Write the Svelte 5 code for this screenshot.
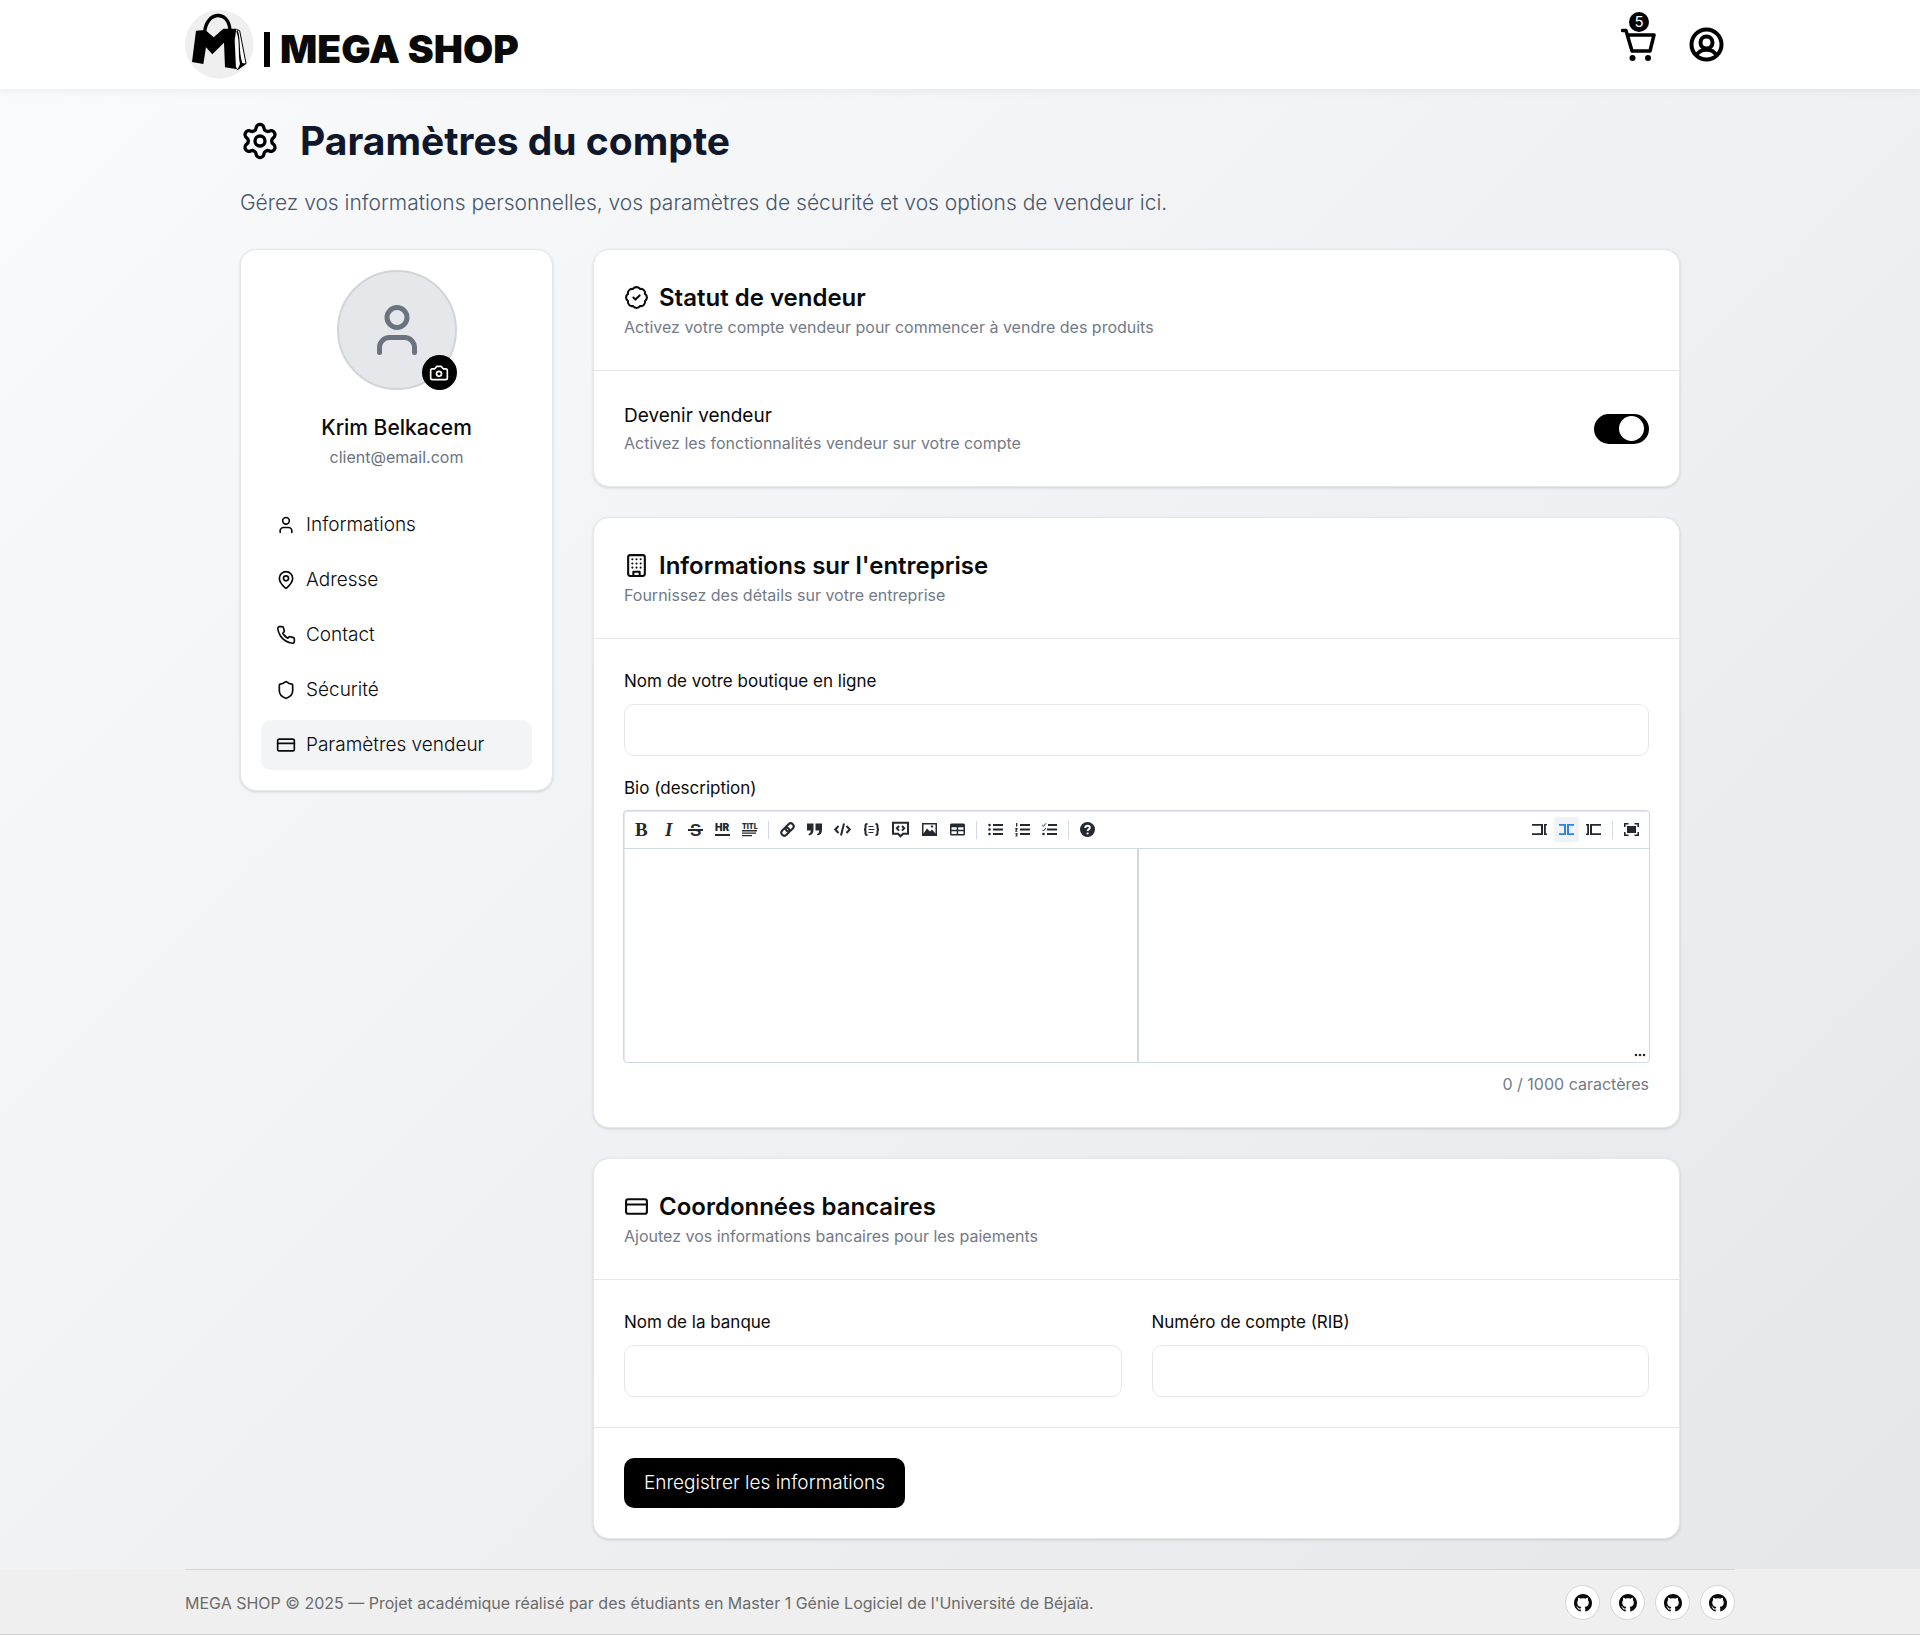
<script>
  let seller = $state(true);
  let bio = $state('');

  const menu = [
    { label: 'Informations', icon: 'user' },
    { label: 'Adresse', icon: 'pin' },
    { label: 'Contact', icon: 'phone' },
    { label: 'Sécurité', icon: 'shield' },
    { label: 'Paramètres vendeur', icon: 'card', active: true }
  ];

  const tools = [
    ['bold', 'italic', 'strike', 'hr', 'title'],
    ['link', 'quote', 'code', 'braces', 'comment', 'image', 'table'],
    ['ul', 'ol', 'task'],
    ['help']
  ];
  const views = [['edit', 'live', 'preview'], ['full']];
  const wide = ['code', 'braces', 'comment', 'image'];
</script>

{#snippet icon(name)}
  <svg class="icon" viewBox="0 0 24 24" aria-hidden="true">
    {#if name === 'user'}
      <path d="M19 21v-2a4 4 0 0 0-4-4H9a4 4 0 0 0-4 4v2" /><circle cx="12" cy="7" r="4" />
    {:else if name === 'pin'}
      <path d="M20 10c0 4.993-5.539 10.193-7.399 11.799a1 1 0 0 1-1.202 0C9.539 20.193 4 14.993 4 10a8 8 0 0 1 16 0" /><circle cx="12" cy="10" r="3" />
    {:else if name === 'phone'}
      <path d="M22 16.92v3a2 2 0 0 1-2.18 2 19.79 19.79 0 0 1-8.63-3.07 19.5 19.5 0 0 1-6-6 19.79 19.79 0 0 1-3.07-8.67A2 2 0 0 1 4.11 2h3a2 2 0 0 1 2 1.72 12.84 12.84 0 0 0 .7 2.81 2 2 0 0 1-.45 2.11L8.09 9.91a16 16 0 0 0 6 6l1.27-1.27a2 2 0 0 1 2.11-.45 12.84 12.84 0 0 0 2.81.7A2 2 0 0 1 22 16.92z" />
    {:else if name === 'shield'}
      <path d="M20 13c0 5-3.5 7.5-7.66 8.95a1 1 0 0 1-.67-.01C7.5 20.5 4 18 4 13V6a1 1 0 0 1 1-1c2 0 4.5-1.2 6.24-2.72a1.17 1.17 0 0 1 1.52 0C14.51 3.81 17 5 19 5a1 1 0 0 1 1 1z" />
    {:else if name === 'card'}
      <rect x="2" y="5" width="20" height="14" rx="2" /><path d="M2 10h20" />
    {:else if name === 'camera'}
      <path d="M14.5 4h-5L7 7H4a2 2 0 0 0-2 2v9a2 2 0 0 0 2 2h16a2 2 0 0 0 2-2V9a2 2 0 0 0-2-2h-3l-2.5-3z" /><circle cx="12" cy="13" r="3" />
    {:else if name === 'badge'}
      <path d="M3.85 8.62a4 4 0 0 1 4.78-4.77 4 4 0 0 1 6.74 0 4 4 0 0 1 4.78 4.78 4 4 0 0 1 0 6.74 4 4 0 0 1-4.77 4.78 4 4 0 0 1-6.75 0 4 4 0 0 1-4.78-4.77 4 4 0 0 1 0-6.76Z" /><path d="m9 12 2 2 4-4" />
    {:else if name === 'building'}
      <rect x="4" y="2" width="16" height="20" rx="2" /><path d="M9 22v-4h6v4M8 6h.01M16 6h.01M12 6h.01M12 10h.01M12 14h.01M16 10h.01M16 14h.01M8 10h.01M8 14h.01" />
    {:else if name === 'gear'}
      <path d="M9.671 4.136a2.34 2.34 0 0 1 4.659 0 2.34 2.34 0 0 0 3.319 1.915 2.34 2.34 0 0 1 2.33 4.033 2.34 2.34 0 0 0 0 3.831 2.34 2.34 0 0 1-2.33 4.033 2.34 2.34 0 0 0-3.319 1.915 2.34 2.34 0 0 1-4.659 0 2.34 2.34 0 0 0-3.32-1.915 2.34 2.34 0 0 1-2.33-4.033 2.34 2.34 0 0 0 0-3.831A2.34 2.34 0 0 1 6.35 6.051a2.34 2.34 0 0 0 3.319-1.915" /><circle cx="12" cy="12" r="3" />
    {/if}
  </svg>
{/snippet}

{#snippet tool(name)}
  <button type="button" class="tool" class:on={name === 'live'} aria-label={name}>
    <svg class:wide={wide.includes(name)} viewBox={wide.includes(name) ? '0 0 17 15' : '0 0 15 15'} aria-hidden="true">
      {#if name === 'bold'}
        <text class="serif" x="1" y="14">B</text>
      {:else if name === 'italic'}
        <text class="serif slanted" x="4" y="14">I</text>
      {:else if name === 'strike'}
        <text class="sans" x="2" y="14">S</text><path class="gap" d="M0 6h15v3H0z" /><path d="M0 7h15v2H0z" />
      {:else if name === 'hr'}
        <text class="tiny" x="0" y="9">HR</text><path d="M0 12h15v2H0z" />
      {:else if name === 'title'}
        <text class="mini" x="0" y="7">TITL</text><path d="M0 8h15v1.5H0zM0 10.500h14v1.200H0zM0 13h10v1.200H0z" />
      {:else if name === 'link'}
        <g class="line thick" transform="rotate(-45 7.500 7.500)"><rect x="0" y="4.500" width="9" height="6" rx="3" /><rect x="6" y="4.500" width="9" height="6" rx="3" /></g>
      {:else if name === 'quote'}
        <path d="M0 1.500h6.500V8Q6.500 12.500 2 13.500L1.500 12Q3.800 11 3.900 8.500H0zM8.500 1.500H15V8Q15 12.500 10.500 13.500L10 12Q12.300 11 12.400 8.500H8.500z" />
      {:else if name === 'code'}
        <path class="line thick" d="M4.500 4 1.200 7.500l3.300 3.500M12.500 4l3.300 3.500-3.300 3.500M10 1.500l-3 12" />
      {:else if name === 'braces'}
        <path class="line thick" d="M4.500 2H4Q2.500 2 2.500 4v2q0 1.500-1.500 1.500 1.500 0 1.500 1.500v2q0 2 1.500 2h.5M12.500 2h.5q1.500 0 1.500 2v2q0 1.500 1.500 1.500-1.500 0-1.500 1.500v2q0 2-1.500 2h-.5" /><path d="M5.500 4h5v1h-5zM5.500 7h6v1h-6zM5.500 10h5v1h-5z" />
      {:else if name === 'comment'}
        <path class="line thick" d="M1 .8h15v11h-5l-2.500 2.500L6 11.800H1zM7 4 4.800 6.300 7 8.600M10 4l2.200 2.300L10 8.600" />
      {:else if name === 'image'}
        <path fill-rule="evenodd" d="M1 1h15v13H1zM2.500 2.500v9L6 6.500l3 3 2-2 3.500 4v-9zM11 3.200a1.200 1.200 0 1 0 .01 0z" />
      {:else if name === 'table'}
        <path fill-rule="evenodd" d="M1.500 1.500h12Q15 1.500 15 3v9q0 1.500-1.500 1.500h-12Q0 13.500 0 12V3q0-1.500 1.500-1.500zM1.500 5.200v2.500h5.200V5.200zM8.200 5.200v2.500h5.300V5.200zM1.500 9.200V12h5.200V9.200zM8.200 9.200V12h5.300V9.200z" />
      {:else if name === 'ul'}
        <circle cx="1.500" cy="3" r="1.300" /><circle cx="1.500" cy="7.500" r="1.300" /><circle cx="1.500" cy="12" r="1.300" /><path d="M5 2h10v2H5zM5 6.500h10v2H5zM5 11h10v2H5z" />
      {:else if name === 'ol'}
        <path d="M1 1h1.300v3.500H1zM.3 6h2.200v1.500L1.500 9h1v.8H.2V9l1-1.500H.3zM.3 11h2.200v3.500H.3v-.8h1v-.6h-.8v-.8h.8v-.6h-1zM5 2h10v2H5zM5 6.500h10v2H5zM5 11h10v2H5z" />
      {:else if name === 'task'}
        <path d="M6 2h9v2H6zM5 6.500h10v2H5zM5 11h10v2H5z" /><circle cx="1.500" cy="12" r="1.300" /><path class="line slim" d="m.2 3 1.300 1.300L4 1.300M.2 7.700 1.500 9 4 6" />
      {:else if name === 'help'}
        <circle cx="7.500" cy="7.500" r="7.500" /><path class="line thick light" d="M5.300 6q0-2.300 2.300-2.300T9.800 5.800c0 1.500-2.200 1.400-2.200 3.200" /><circle class="dot" cx="7.600" cy="11.500" r="1.100" />
      {:else if name === 'edit'}
        <path d="M0 2h11v11H0v-1.800h9V3.800H0zM12 2h3v1.500h-1.200v8H15V13h-3z" />
      {:else if name === 'live'}
        <path d="M0 2h7v11H0v-1.800h5V3.800H0zM8 2h7v1.800h-5v7.400h5V13H8z" />
      {:else if name === 'preview'}
        <path d="M15 2H4v11h11v-1.800H6V3.800h9zM3 2H0v1.500h1.200v8H0V13h3z" />
      {:else if name === 'full'}
        <path d="M3 4h9v7H3zM0 1h4.500v1.600H1.600V5H0zM15 1h-4.500v1.600h2.900V5H15zM0 14h4.500v-1.600H1.600V10H0zM15 14h-4.500v-1.600h2.900V10H15z" />
      {/if}
    </svg>
  </button>
{/snippet}

<header class="topbar">
  <div class="wrap">
    <a class="brand" href="#accueil">
      <svg class="logo" viewBox="0 0 207 207" aria-hidden="true">
        <circle cx="103" cy="103" r="103" fill="#efefef" />
        <path d="M59 66C64 4 130 -2 135 60" fill="none" stroke="#000" stroke-width="10" />
        <path d="M33 62 61 60 86 82 115 56 154 56 149 90 153 177 120 172 117 98 82 133 63 112 55 162 21 156Z" />
        <path d="M154 58 164 62 183 160 157 179 153 172" fill="#fff" stroke="#000" stroke-width="3" />
        <path d="M158 62C168 95 158 120 166 160L158 178 155 100Z" fill="#fff" />
        <path d="M158 60C168 90 161 125 172 159L184 161 157 180 165 162C158 130 166 95 154 64Z" />
      </svg>
      <span class="bar"></span>
      <span class="wordmark">MEGA SHOP</span>
    </a>
    <nav class="actions" aria-label="Compte">
      <a class="cart" href="#panier" aria-label="Panier">
        <svg viewBox="0 0 35 35" aria-hidden="true">
          <path d="M1.500 3.500h3.500l6 20.500h18l4-16H7" fill="none" stroke="#000" stroke-width="3.500" stroke-linecap="round" stroke-linejoin="round" />
          <circle cx="11.500" cy="31" r="3" /><circle cx="27" cy="31" r="3" />
        </svg>
        <span class="count">5</span>
      </a>
      <a class="account" href="#profil" aria-label="Profil">
        <svg viewBox="0 0 35 35" aria-hidden="true" fill="none" stroke="#000" stroke-width="4">
          <circle cx="17.500" cy="17.500" r="15" /><circle cx="17.500" cy="15.500" r="6" /><path d="M7.500 29C10 20.500 25 20.500 27.500 29" />
        </svg>
      </a>
    </nav>
  </div>
</header>

<main>
  <div class="page">
    <h1>{@render icon('gear')}Paramètres du compte</h1>
    <p class="lead">Gérez vos informations personnelles, vos paramètres de sécurité et vos options de vendeur ici.</p>

    <div class="columns">
      <aside class="panel side">
        <div class="avatar">
          {@render icon('user')}
          <button type="button" class="photo" aria-label="Changer la photo">{@render icon('camera')}</button>
        </div>
        <p class="name">Krim Belkacem</p>
        <p class="email">client@email.com</p>
        <nav class="menu" aria-label="Paramètres">
          {#each menu as item}
            <button type="button" class:active={item.active}>{@render icon(item.icon)}{item.label}</button>
          {/each}
        </nav>
      </aside>

      <div class="stack">
        <section class="panel">
          <div class="head">
            <h2>{@render icon('badge')}Statut de vendeur</h2>
            <p class="muted">Activez votre compte vendeur pour commencer à vendre des produits</p>
          </div>
          <div class="body row">
            <div>
              <label class="option" for="seller">Devenir vendeur</label>
              <p class="muted">Activez les fonctionnalités vendeur sur votre compte</p>
            </div>
            <input id="seller" class="switch" type="checkbox" bind:checked={seller} />
          </div>
        </section>

        <section class="panel">
          <div class="head">
            <h2>{@render icon('building')}Informations sur l'entreprise</h2>
            <p class="muted">Fournissez des détails sur votre entreprise</p>
          </div>
          <div class="body fields">
            <div class="field">
              <label for="shop">Nom de votre boutique en ligne</label>
              <input id="shop" type="text" />
            </div>
            <div class="field">
              <label for="bio">Bio (description)</label>
              <div class="editor">
                <div class="toolbar">
                  {#each tools as group, i}
                    {#if i}<span class="sep"></span>{/if}
                    {#each group as name}{@render tool(name)}{/each}
                  {/each}
                  <span class="spring"></span>
                  {#each views as group, i}
                    {#if i}<span class="sep"></span>{/if}
                    {#each group as name}{@render tool(name)}{/each}
                  {/each}
                </div>
                <div class="panes">
                  <textarea id="bio" maxlength="1000" bind:value={bio}></textarea>
                  <div class="preview">{bio}</div>
                </div>
                <svg class="grip" viewBox="0 0 12 4" aria-hidden="true"><circle cx="2" cy="2" r="1.300" /><circle cx="6" cy="2" r="1.300" /><circle cx="10" cy="2" r="1.300" /></svg>
              </div>
              <p class="muted counter">{bio.length} / 1000 caractères</p>
            </div>
          </div>
        </section>

        <section class="panel">
          <div class="head">
            <h2>{@render icon('card')}Coordonnées bancaires</h2>
            <p class="muted">Ajoutez vos informations bancaires pour les paiements</p>
          </div>
          <div class="body pair">
            <div class="field">
              <label for="bank">Nom de la banque</label>
              <input id="bank" type="text" />
            </div>
            <div class="field">
              <label for="rib">Numéro de compte (RIB)</label>
              <input id="rib" type="text" />
            </div>
          </div>
          <div class="foot"><button type="button" class="save">Enregistrer les informations</button></div>
        </section>
      </div>
    </div>
  </div>
</main>

<footer>
  <div class="wrap credits">
    <p>MEGA SHOP © 2025 — Projet académique réalisé par des étudiants en Master 1 Génie Logiciel de l'Université de Béjaïa.</p>
    <div class="links">
      {#each [1, 2, 3, 4] as n}
        <a href="#github-{n}" aria-label="GitHub {n}">
          <svg viewBox="0 0 16 16" aria-hidden="true"><path d="M8 0C3.580 0 0 3.580 0 8c0 3.540 2.290 6.530 5.470 7.590.4.070.55-.17.55-.38 0-.19-.01-.82-.01-1.490-2.010.370-2.530-.49-2.690-.94-.09-.23-.48-.94-.82-1.130-.28-.15-.68-.52-.01-.53.63-.01 1.080.58 1.230.82.72 1.210 1.870.87 2.330.66.070-.52.280-.87.510-1.070-1.780-.2-3.640-.89-3.640-3.950 0-.87.310-1.590.820-2.150-.08-.2-.36-1.020.080-2.120 0 0 .670-.21 2.200.82.640-.18 1.320-.27 2-.27.680 0 1.360.090 2 .270 1.530-1.040 2.200-.82 2.200-.82.440 1.100.160 1.920.080 2.120.510.560.820 1.270.820 2.150 0 3.070-1.870 3.750-3.650 3.950.290.250.540.730.540 1.480 0 1.070-.01 1.930-.01 2.200 0 .210.150.460.550.380A8.013 8.013 0 0 0 16 8c0-4.420-3.580-8-8-8z" /></svg>
        </a>
      {/each}
    </div>
  </div>
</footer>

<style>
  :global(body) {
    background: #efefef;
    color: #0a0a0a;
    font: 300 19px/30px Inter, "Liberation Sans", sans-serif;
  }
  :global(#app *) { box-sizing: border-box; }

  h1, h2, p { margin: 0; }
  button, input, textarea { font: inherit; color: inherit; }
  button { border: 0; background: none; padding: 0; cursor: pointer; }

  .icon {
    width: 20px;
    height: 20px;
    flex: none;
    fill: none;
    stroke: currentColor;
    stroke-width: 2;
    stroke-linecap: round;
    stroke-linejoin: round;
  }

  .wrap { max-width: 1550px; margin: 0 auto; }

  .topbar {
    position: relative;
    background: #fff;
    box-shadow: 0 0 10px rgba(0, 0, 0, 0.08);
  }
  .topbar .wrap { display: flex; align-items: center; justify-content: space-between; padding: 10px 0; }
  .brand { display: flex; align-items: center; gap: 10px; color: #0a0a0a; text-decoration: none; }
  .logo { width: 69px; height: 69px; }
  .bar { width: 6px; height: 35px; margin-top: 10px; background: #000; }
  .wordmark { margin-top: 9px; font-size: 39px; font-weight: 900; line-height: 36px; }
  .actions { display: flex; align-items: center; gap: 33px; padding-right: 11px; }
  .actions svg { display: block; width: 35px; height: 35px; }
  .cart { position: relative; }
  .count {
    position: absolute;
    left: 8px;
    top: -15px;
    width: 20px;
    height: 20px;
    border-radius: 50%;
    background: #000;
    color: #fff;
    font-size: 15px;
    font-weight: 400;
    line-height: 20px;
    text-align: center;
  }

  main { padding: 30px 20px; background: linear-gradient(135deg, #f9fafb, #f0f1f4 50%, #e5e6ea); }
  .page { max-width: 1440px; margin: 0 auto; }
  h1 {
    display: flex;
    align-items: center;
    gap: 20px;
    color: #0f172a;
    font-size: 39px;
    font-weight: 700;
    line-height: 44px;
  }
  h1 .icon { width: 40px; height: 40px; color: #000; }
  .lead { margin: 25px 0 31px; color: #475569; font-size: 21px; }

  .columns { display: grid; grid-template-columns: 313px minmax(0, 1fr); gap: 40px; align-items: start; }
  .stack { display: grid; gap: 30px; }
  .panel {
    border: 1px solid #e5e7eb;
    border-radius: 16px;
    background: #fff;
    box-shadow: 0 1px 3px rgba(0, 0, 0, 0.14);
  }

  .side { padding: 20px; text-align: center; }
  .avatar {
    position: relative;
    display: grid;
    place-items: center;
    width: 120px;
    height: 120px;
    margin: 0 auto 24px;
    border: 2px solid #d1d5db;
    border-radius: 50%;
    background: #e5e7eb;
    color: #6b7280;
  }
  .avatar > .icon { width: 60px; height: 60px; }
  .photo {
    position: absolute;
    right: -2px;
    bottom: -2px;
    display: grid;
    place-items: center;
    width: 35px;
    height: 35px;
    border-radius: 50%;
    background: #000;
    color: #fff;
  }
  .name { font-size: 21px; font-weight: 500; line-height: 28px; }
  .email { color: #6b7280; font-size: 16px; font-weight: 400; }
  .menu { display: grid; gap: 5px; margin-top: 28px; }
  .menu button { display: flex; align-items: center; gap: 10px; padding: 10px 15px; border-radius: 10px; }
  .menu .active { background: #f3f4f6; }

  .head { padding: 30px; border-bottom: 1px solid #e5e7eb; }
  h2 { display: flex; align-items: center; gap: 10px; font-size: 24px; font-weight: 600; line-height: 35px; }
  h2 .icon { width: 25px; height: 25px; }
  .muted { color: #737a88; font-size: 16px; font-weight: 400; line-height: 25px; }
  .body { padding: 30px; }
  .row { display: flex; align-items: center; justify-content: space-between; }
  .option { display: block; font-weight: 400; }
  .switch {
    appearance: none;
    display: flex;
    align-items: center;
    width: 55px;
    height: 30px;
    margin: 0;
    padding: 0 5px;
    border-radius: 15px;
    background: #d1d5db;
    cursor: pointer;
  }
  .switch::before { content: ""; width: 25px; height: 25px; border-radius: 50%; background: #fff; }
  .switch:checked { justify-content: flex-end; background: #000; }

  .fields { display: grid; gap: 20px; }
  .pair { display: grid; grid-template-columns: 1fr 1fr; gap: 30px; }
  .field label { display: block; margin-bottom: 10px; font-size: 17px; font-weight: 400; line-height: 25px; }
  .field input {
    display: block;
    width: 100%;
    height: 52px;
    padding: 0 15px;
    border: 1px solid #e5e7eb;
    border-radius: 10px;
    background: #fff;
  }

  .editor {
    position: relative;
    margin: -1px -1px 0;
    border: 1px solid #cfd8e3;
    border-radius: 4px;
    box-shadow: inset 1px 1px 0 #e3e9f0;
  }
  .toolbar {
    display: flex;
    align-items: center;
    gap: 2px;
    padding: 6px 5px;
    border-bottom: 1px solid #cfd8e3;
    color: #24292f;
  }
  .tool { flex: none; display: grid; place-items: center; height: 25px; padding: 0 5px; border-radius: 2px; }
  .tool svg { display: block; width: 15px; height: 15px; overflow: visible; fill: currentColor; }
  .tool .wide { width: 17px; }
  .on { background: #f0f2f5; color: #2f81e8; }
  .sep { width: 1px; height: 18px; margin: 0 4px; background: #cfd8e3; }
  .spring { flex: 1; }
  .line { fill: none; stroke: currentColor; stroke-width: 1.5; }
  .thick { stroke-width: 2; }
  .slim { stroke-width: 1; }
  .light { stroke: #fff; }
  .dot, .gap { fill: #fff; }
  .serif { font: 700 19px "Liberation Serif", serif; }
  .slanted { font-style: italic; }
  .sans { font: 700 17px "Liberation Sans", sans-serif; }
  .tiny { font: 900 10px Inter, sans-serif; }
  .mini { font: 900 7px Inter, sans-serif; }
  .panes { display: grid; grid-template-columns: 1fr 1fr; }
  .panes textarea { display: block; height: 213px; padding: 10px; border: 0; background: none; resize: none; font-size: 16px; }
  .preview { padding: 10px; border-left: 2px solid #cfd8e3; font-size: 16px; }
  .grip { position: absolute; right: 3px; bottom: 5px; width: 12px; height: 4px; fill: #24292f; }
  .counter { margin-top: 9px; text-align: right; }

  .foot { padding: 30px; border-top: 1px solid #e5e7eb; }
  .save { display: block; padding: 10px 20px; border-radius: 10px; background: #000; color: #fff; }

  footer { border-bottom: 1px solid #d0d0d0; color: #6b6b6b; font-size: 16px; font-weight: 400; }
  .credits {
    display: flex;
    align-items: center;
    justify-content: space-between;
    padding: 15px 0 14px;
    border-top: 1px solid #d4d5d8;
  }
  .links { display: flex; gap: 10px; }
  .links a {
    display: grid;
    place-items: center;
    width: 35px;
    height: 35px;
    border: 1px solid #d4d4d4;
    border-radius: 50%;
    background: #fff;
    color: #0a0a0a;
  }
  .links svg { width: 18px; height: 18px; fill: currentColor; }
</style>
